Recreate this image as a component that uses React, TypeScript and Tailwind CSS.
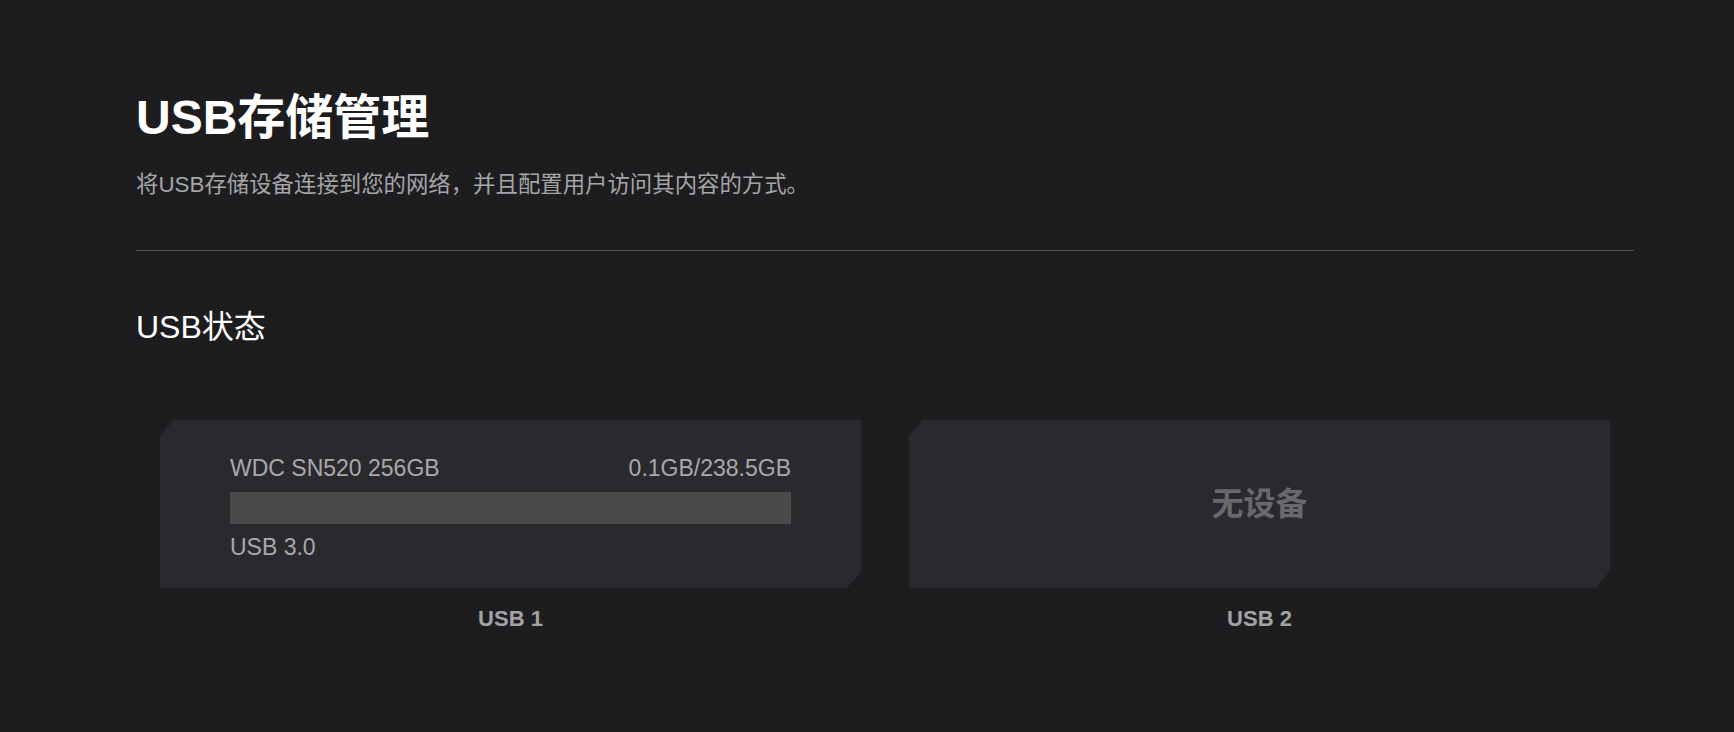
const FONT = "font-['Liberation_Sans','Noto_Sans_CJK_SC',sans-serif]";

const CARD_SHAPE =
  "[clip-path:polygon(14px_0,100%_0,100%_calc(100%-17px),calc(100%-14px)_100%,0_100%,0_15px)]";

interface UsbPortProps {
  label: string;
  device?: {
    name: string;
    used: string;
    total: string;
    percent: number;
    speed: string;
  };
}

function UsbPort({ label, device }: UsbPortProps) {
  return (
    <div className="flex flex-col items-center">
      <div className={`w-full h-[168px] bg-[#2a292e] ${CARD_SHAPE}`}>
        {device ? (
          <div className="px-[70px] pt-[33px]">
            <div className="flex items-center justify-between text-[23px] leading-[30px] text-[#a9a9ab]">
              <span>{device.name}</span>
              <span>
                {device.used}/{device.total}
              </span>
            </div>
            <div className="mt-[9px] h-[32px] bg-[#4a4a4a]">
              <div className="h-full bg-[#5a5a5a]" style={{ width: `${device.percent}%` }} />
            </div>
            <div className="mt-[8px] text-[23px] leading-[30px] text-[#a9a9ab]">{device.speed}</div>
          </div>
        ) : (
          <div className="h-full flex items-center justify-center text-[32px] font-bold text-[#69696d]">
            无设备
          </div>
        )}
      </div>
      <div className="mt-[17px] text-[22px] leading-[28px] font-bold text-[#a3a3a6]">{label}</div>
    </div>
  );
}

export default function App() {
  return (
    <div className={`min-h-screen bg-[#1d1d1f] ${FONT}`}>
      <div className="pl-[136px] pr-[100px] pt-[89px] pb-[60px]">
        {/* Header */}
        <h1 className="text-[48px] leading-[58px] font-bold text-white">USB存储管理</h1>
        <p className="mt-[22px] text-[22.4px] leading-[32px] text-[#a5a5a8]">
          将USB存储设备连接到您的网络，并且配置用户访问其内容的方式。
        </p>

        <div className="mt-[49px] h-px bg-[#57575b]" />

        {/* USB status */}
        <h2 className="mt-[54px] text-[32px] leading-[44px] text-white">USB状态</h2>

        <div className="mt-[71px] px-[24px] grid grid-cols-2 gap-[48px]">
          <UsbPort
            label="USB 1"
            device={{
              name: "WDC SN520 256GB",
              used: "0.1GB",
              total: "238.5GB",
              percent: 0,
              speed: "USB 3.0",
            }}
          />
          <UsbPort label="USB 2" />
        </div>
      </div>
    </div>
  );
}
